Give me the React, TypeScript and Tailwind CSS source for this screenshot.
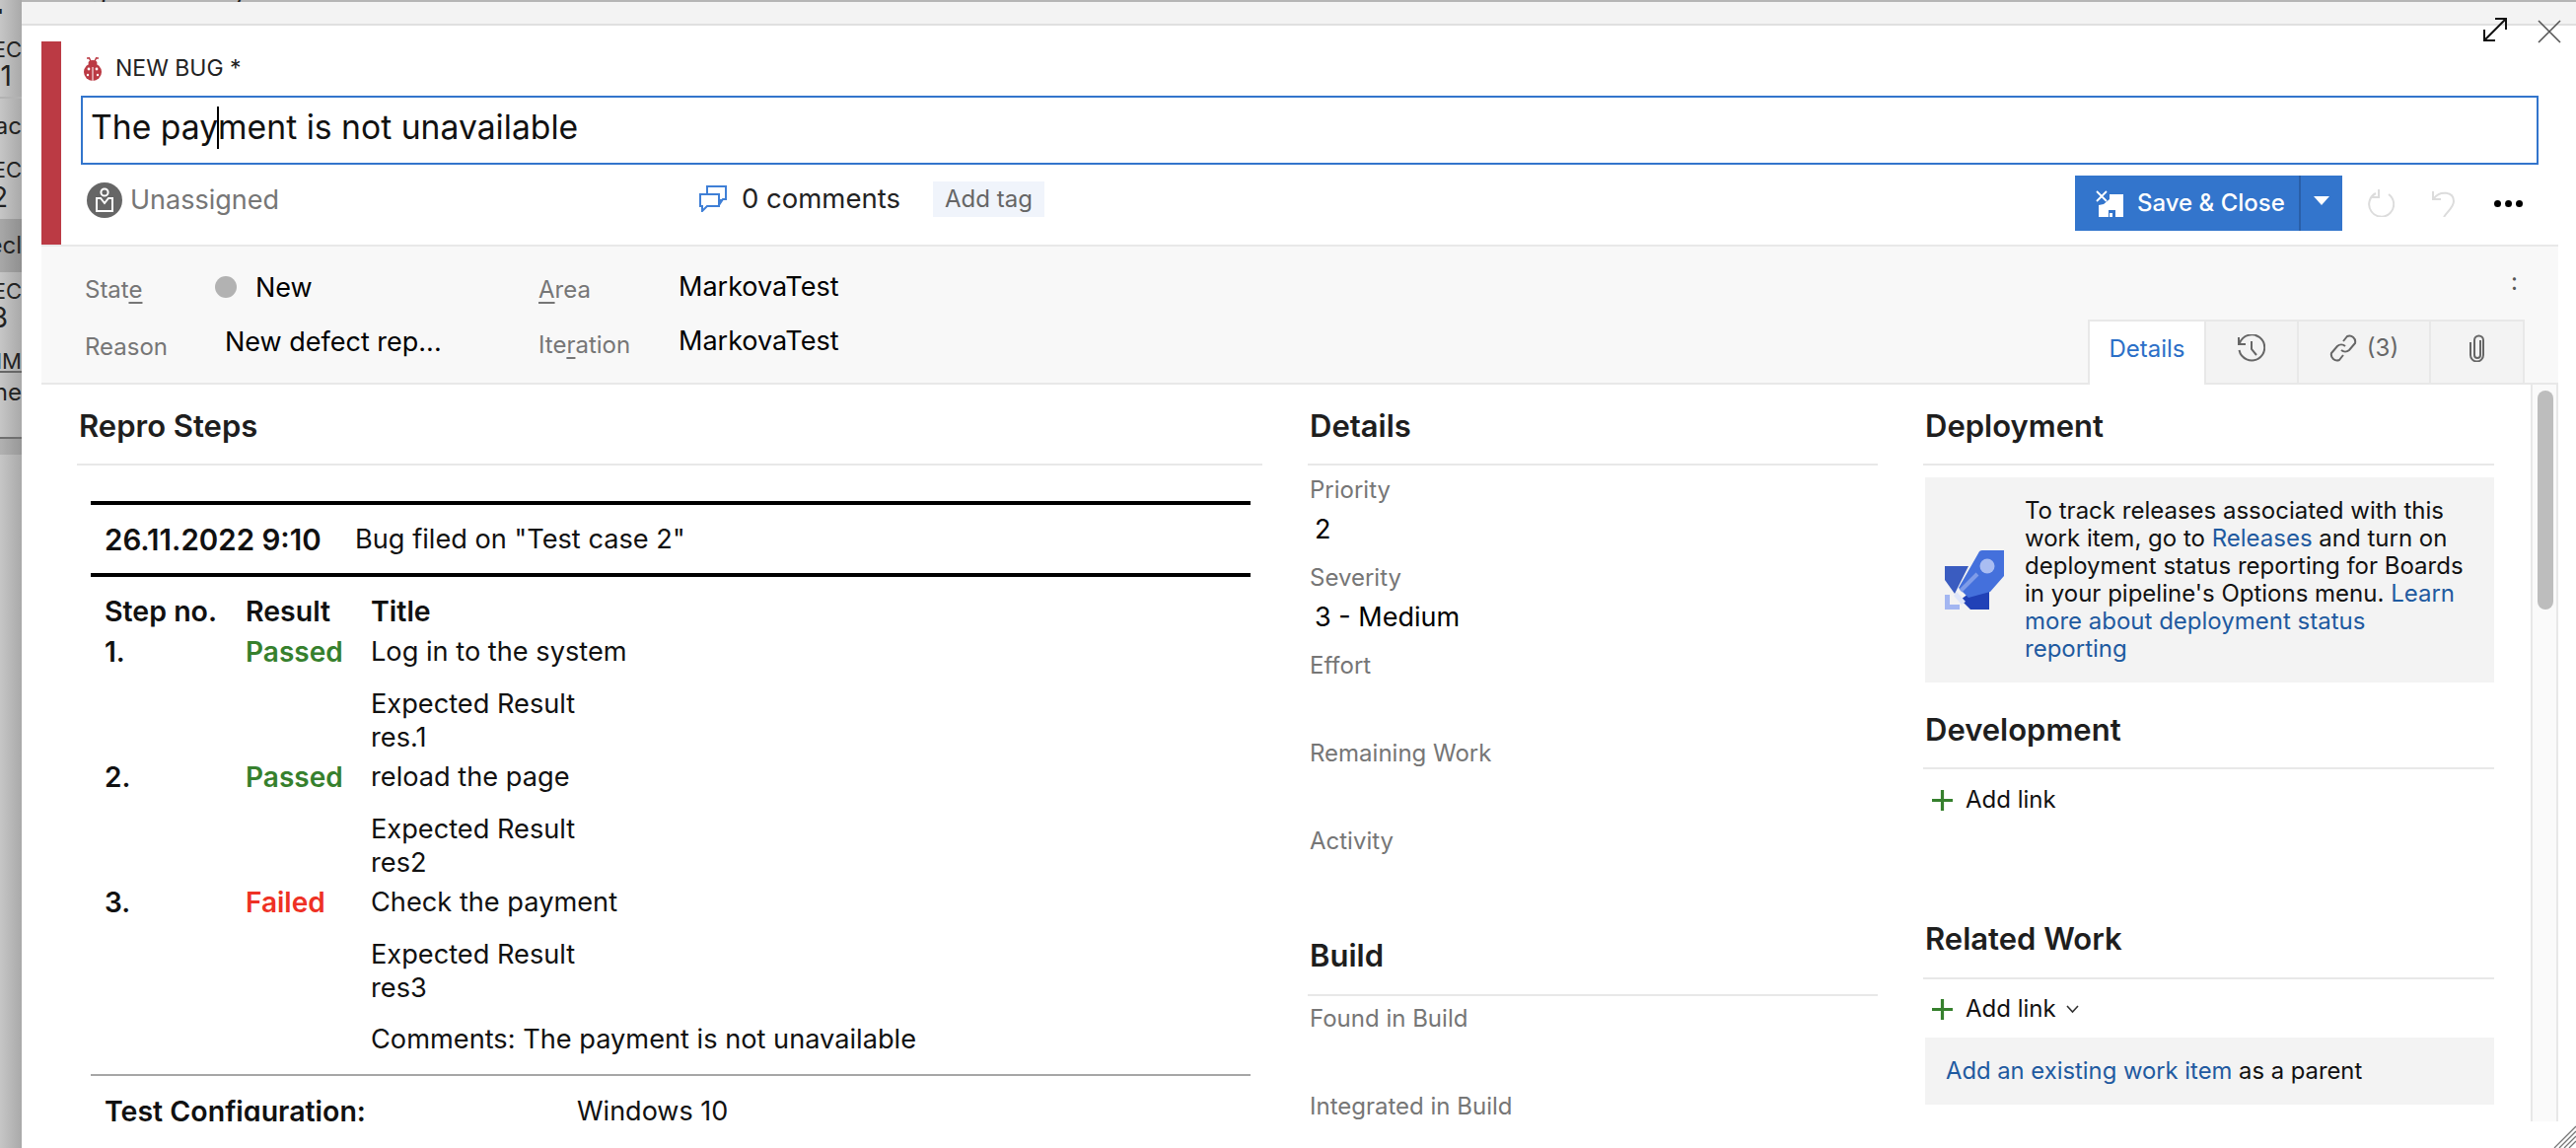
import React from "react";

const font = { fontFamily: "Inter, 'Liberation Sans', sans-serif" };

function Bug() {
  return (
    <svg width="18" height="24" viewBox="0 0 18 24" className="shrink-0">
      <path d="M5 0 L7 4 M13 0 L11 4 M3 1 L5 1 M13 1 L15 1" stroke="#bb3a44" strokeWidth="1.5" fill="none" />
      <ellipse cx="9" cy="6" rx="4.5" ry="3" fill="#bb3a44" />
      <ellipse cx="9" cy="15" rx="9" ry="9" fill="#bb3a44" />
      <circle cx="5" cy="12" r="1.4" fill="#fff" />
      <circle cx="13" cy="12" r="1.4" fill="#fff" />
      <circle cx="4" cy="18" r="1.2" fill="#fff" />
      <circle cx="14" cy="18" r="1.2" fill="#fff" />
      <path d="M9 10 V24" stroke="#fff" strokeWidth="1" />
    </svg>
  );
}

function Avatar() {
  return (
    <svg width="36" height="36" viewBox="0 0 36 36" className="shrink-0">
      <circle cx="18" cy="18" r="18" fill="#666" />
      <circle cx="18" cy="10" r="3.6" fill="none" stroke="#fff" strokeWidth="2" />
      <path d="M10 16 H14 L18 21 L22 16 H26 V29 H10 Z" fill="none" stroke="#fff" strokeWidth="2" />
    </svg>
  );
}

function Comments() {
  return (
    <svg width="28" height="27" viewBox="0 0 28 27" fill="none" stroke="#3f7fd6" strokeWidth="2" className="shrink-0">
      <path d="M8 8 V1 H27 V14 H24 L22 17 V14" />
      <path d="M1 9 H20 V21 H8 L3 26 V21 H1 Z" />
    </svg>
  );
}

function SaveIcon() {
  return (
    <svg width="28" height="27" viewBox="0 0 28 27" className="shrink-0">
      <path d="M1 1 L11 11 M11 1 L1 11" stroke="#fff" strokeWidth="1.8" />
      <path d="M14 4 H28 V27 H20 V20 H13 V27 H3 V15 L8 14 L14 9 Z" fill="#fff" />
      <rect x="14" y="23" width="3" height="4" fill="#fff" />
    </svg>
  );
}

function Rocket() {
  return (
    <svg width="60" height="60" viewBox="0 0 60 60" className="shrink-0">
      <path d="M0 16 L24 16 L10 44 L0 30 Z" fill="#3a5cc0" />
      <path d="M45 28 V60 H26 L16 50 Z" fill="#2141b7" />
      <path d="M34 3 Q35 0 38 0 H60 V26 L46 42 L24 48 L14 38 Z" fill="#4470dc" />
      <circle cx="43" cy="16" r="7.5" fill="#a9bdf2" />
      <path d="M16 41 L33 24" stroke="#7f9ce8" strokeWidth="4" />
      <path d="M12 42 L21 52 L17 55 L9 46 Z" fill="#dfe6fa" />
      <path d="M0 45 H5 V55 H15 V60 H0 Z" fill="#a3b6f1" />
    </svg>
  );
}

function Plus() {
  return (
    <svg width="21" height="21" viewBox="0 0 21 21" className="shrink-0">
      <path d="M10.5 0 V21 M0 10.5 H21" stroke="#36802d" strokeWidth="3.2" />
    </svg>
  );
}

function Left() {
  const rows: [string, string][] = [
    ["h-[14px] leading-[40px] text-[30px] mb-[22px]", "In"],
    ["h-[28px] leading-[28px] text-[22px]", "EC"],
    ["h-[26px] leading-[26px] text-[28px] pr-[10px]", "1"],
    ["h-[10px] mb-[14px] border-b-2 border-[#b3b3b3]", ""],
    ["h-[28px] leading-[28px] text-[24px] mb-[16px]", "oac"],
    ["h-[28px] leading-[28px] text-[22px]", "EC"],
    ["h-[28px] leading-[28px] text-[28px] pr-[14px] mb-[8px]", "2"],
    ["h-[54px] leading-[54px] text-[24px] mb-[5px] bg-black/15", "ecl"],
    ["h-[28px] leading-[28px] text-[22px]", "EC"],
    ["h-[26px] leading-[26px] text-[28px] pr-[14px] mb-[20px]", "3"],
    ["h-[23px] leading-[22px] text-[22px] border-b-2 border-[#666] mb-[2px]", "MM"],
    ["h-[36px] leading-[36px] text-[24px]", "he"],
    ["h-[29px] border-b-2 border-[#6f6f6f]", ""],
    ["h-[16px] bg-black/10", ""],
  ];
  return (
    <div className="w-[22px] h-full shrink-0 overflow-hidden bg-gradient-to-r from-[#c6c6c6] to-[#a9a9a9] text-[#222]">
      {rows.map((r, i) => (
        <div key={i} className={`flex justify-end whitespace-nowrap overflow-hidden ${r[0]}`}>
          {r[1]}
        </div>
      ))}
    </div>
  );
}

function Label({ children, className = "" }: { children: React.ReactNode; className?: string }) {
  return <div className={`text-[24px] leading-[32px] text-[#767676] ${className}`}>{children}</div>;
}

function Head({ children, className }: { children: React.ReactNode; className: string }) {
  return (
    <div className={`border-b-2 border-[#e8e8e8] ${className}`}>
      <div className="text-[31px] leading-[36px] font-semibold text-[#1e1e1e] pl-[2px]">{children}</div>
    </div>
  );
}

function Step({ n, result, color, title, res }: { n: string; result: string; color: string; title: string; res: string }) {
  return (
    <div className="grid grid-cols-[143px_127px_1fr] text-[27.2px] leading-[34px] text-[#111]">
      <div className="font-semibold text-[28px]">{n}</div>
      <div className={`font-semibold text-[28px] ${color}`}>{result}</div>
      <div>{title}</div>
      <div className="col-start-3 mt-[19px]">Expected Result</div>
      <div className="col-start-3">{res}</div>
    </div>
  );
}

function Tab({ children, className }: { children: React.ReactNode; className: string }) {
  return <div className={`flex items-center justify-center gap-[10px] h-[66px] pb-[8px] border-t-2 border-r-2 border-[#e8e8e8] ${className}`}>{children}</div>;
}

function Field({ label, value }: { label: React.ReactNode; value: string }) {
  return (
    <div>
      <Label>{label}</Label>
      <div className="h-[57px] leading-[48px] text-[27px] text-black pl-[5px]">{value}</div>
    </div>
  );
}

export default function App() {
  return (
    <div style={font} className="w-[2612px] h-[1164px] flex overflow-hidden bg-white">
      <Left />
      <div className="flex-1 flex flex-col min-w-0 relative">
        <div className="h-[2px] bg-[#b5b5b5] shrink-0 overflow-hidden">
          <div className="-mt-[26px] pl-[40px] text-[26px] leading-[34px] text-[#222] whitespace-nowrap">Log in to the system</div>
        </div>
        <div className="h-[24px] bg-[#f3f3f3] border-b-2 border-[#e0e0e0] shrink-0" />

        <svg width="26" height="26" viewBox="0 0 26 26" className="absolute left-[2495px] top-[17px]" fill="none" stroke="#111" strokeWidth="2">
          <path d="M2 24 L24 2 M13 2 H24 V13 M2 13 V24 H13" />
        </svg>
        <svg width="24" height="24" viewBox="0 0 24 24" className="absolute left-[2551px] top-[20px]" fill="none" stroke="#555" strokeWidth="1.6">
          <path d="M1 1 L23 23 M23 1 L1 23" />
        </svg>

        <div className="ml-[20px] mr-[18px] mt-[16px] flex-1 flex flex-col min-h-0">
          <div className="h-[206px] border-l-[20px] border-[#bb3a44] pl-[20px] pr-[20px] flex flex-col shrink-0">
            <div className="h-[55px] flex items-center gap-[14px] pl-[3px] text-[23px] text-[#222]">
              <Bug />
              <span>NEW BUG *</span>
            </div>
            <div className="h-[70px] border-2 border-[#3375cc] flex items-center pl-[8px] pb-[6px] text-[33.7px] text-[#111] whitespace-nowrap">
              <span>The pay</span>
              <span className="w-[2px] h-[43px] bg-black -mx-[1px]" />
              <span>ment is not unavailable</span>
            </div>
            <div className="flex-1 flex pt-[11px] items-start">
              <div className="w-[627px] flex items-center gap-[8px] pl-[6px] pt-[5px]">
                <Avatar />
                <span className="text-[27px] text-[#767676]">Unassigned</span>
              </div>
              <div className="flex items-center gap-[15px] pt-[3px] text-[27.5px] text-[#222]">
                <Comments />
                <span className="w-[194px]">0 comments</span>
              </div>
              <div className="mt-[6px] w-[113px] h-[36px] bg-[#f0f4fb] text-[24px] leading-[36px] text-center text-[#666]">Add tag</div>
              <div className="flex-1" />
              <div className="h-[56px] w-[271px] bg-[#3375cc] flex text-white text-[24px] font-medium">
                <div className="flex-1 flex items-center gap-[14px] pl-[21px] border-r-2 border-[#2a5fa8]">
                  <SaveIcon />
                  <span className="whitespace-nowrap">Save &amp; Close</span>
                </div>
                <div className="w-[42px] flex justify-center pt-[21px]">
                  <div className="w-0 h-0 border-x-[8px] border-x-transparent border-t-[9px] border-t-white" />
                </div>
              </div>
              <svg width="28" height="28" viewBox="0 0 28 28" className="ml-[25px] mt-[14px]" fill="none" stroke="#dcdcdc" strokeWidth="2">
                <path d="M9 4 A12.5 12.5 0 1 0 22 5 M12 0 V8 H4" />
              </svg>
              <svg width="24" height="28" viewBox="0 0 24 28" className="ml-[38px] mt-[14px]" fill="none" stroke="#dcdcdc" strokeWidth="2">
                <path d="M1 2 V10 H9 M2 9 C8 1 22 2 22 12 C22 18 16 22 12 28" />
              </svg>
              <div className="ml-[39px] mr-[16px] mt-[25px] flex gap-[4px]">
                <div className="w-[7px] h-[7px] rounded-full bg-black" />
                <div className="w-[7px] h-[7px] rounded-full bg-black" />
                <div className="w-[7px] h-[7px] rounded-full bg-black" />
              </div>
            </div>
          </div>

          <div className="h-[142px] shrink-0 bg-[#f8f8f8] border-y-2 border-[#e8e8e8] flex justify-between">
            <div className="pl-[44px] pt-[21px] text-[27px] text-black">
              <div className="h-[42px] flex items-center">
                <Label className="w-[142px] pt-[4px]">Stat<u className="underline-offset-4">e</u></Label>
                <div className="w-[318px] flex items-center gap-[19px] -ml-[10px]">
                  <div className="w-[22px] h-[22px] rounded-full bg-[#b2b2b2] -mt-[2px]" />
                  <span>New</span>
                </div>
                <Label className="w-[142px] pt-[4px] ml-[10px]"><u className="underline-offset-4">A</u>rea</Label>
                <span className="pb-[2px]">MarkovaTest</span>
              </div>
              <div className="h-[42px] mt-[14px] flex items-center">
                <Label className="w-[142px] pt-[8px]">Reason</Label>
                <div className="w-[318px] whitespace-nowrap pb-[2px]">New defect rep...</div>
                <Label className="w-[142px] pt-[4px]">Ite<u className="underline-offset-4">r</u>ation</Label>
                <span className="pb-[4px]">MarkovaTest</span>
              </div>
            </div>
            <div className="flex flex-col items-end pr-[34px] -mb-[2px]">
              <div className="h-[74px] pr-[7px] pt-[20px] text-[24px] leading-[32px] text-[#555]">:</div>
              <div className="flex text-[24px]">
                <Tab className="w-[120px] bg-white border-l-2 text-[#2b6fc7]">Details</Tab>
                <Tab className="w-[94px] bg-[#f3f3f3] border-b-2">
                  <svg width="28" height="28" viewBox="0 0 28 28" fill="none" stroke="#666" strokeWidth="2">
                    <path d="M1 3 V10 H8 M2 9 A13 13 0 1 1 1.5 16 M14 7 V15 L19 21" />
                  </svg>
                </Tab>
                <Tab className="w-[134px] bg-[#f3f3f3] border-b-2 text-[#666]">
                  <svg width="28" height="28" viewBox="0 0 28 28" fill="none" stroke="#666" strokeWidth="2">
                    <path d="M12 16 A6 6 0 0 0 20 16 L26 9 A6 6 0 0 0 18 2 L14 7" />
                    <path d="M16 12 A6 6 0 0 0 8 12 L2 19 A6 6 0 0 0 10 26 L14 21" />
                  </svg>
                  <span>(3)</span>
                </Tab>
                <Tab className="w-[95px] bg-[#f3f3f3] border-b-2">
                  <svg width="16" height="28" viewBox="0 0 16 28" fill="none" stroke="#666" strokeWidth="2">
                    <path d="M11 6 V21 A3 3 0 0 1 5 21 V6 A4.5 4.5 0 0 1 14 6 V21 A6.5 6.5 0 0 1 1 21 V8" />
                  </svg>
                </Tab>
              </div>
            </div>
          </div>

          <div className="h-[747px] flex overflow-hidden">
            <div className="ml-[36px] w-[1202px] shrink-0">
              <Head className="h-[82px] pt-[24px]">Repro Steps</Head>
              <div className="ml-[14px] w-[1176px] mt-[36px]">
                <div className="h-[77px] border-y-4 border-black flex items-center pl-[14px] pt-[2px] text-[27.2px] text-[#111]">
                  <span className="w-[254px] font-semibold text-[29.5px]">26.11.2022 9:10</span>
                  <span>Bug filed on "Test case 2"</span>
                </div>
                <div className="pl-[14px]">
                  <div className="grid grid-cols-[143px_127px_1fr] text-[28.5px] leading-[34px] font-semibold text-[#111] mt-[18px] mb-[7px]">
                    <div>Step no.</div>
                    <div>Result</div>
                    <div>Title</div>
                  </div>
                  <div className="flex flex-col gap-[6px]">
                    <Step n="1." result="Passed" color="text-[#36802d]" title="Log in to the system" res="res.1" />
                    <Step n="2." result="Passed" color="text-[#36802d]" title="reload the page" res="res2" />
                    <Step n="3." result="Failed" color="text-[#ee3124]" title="Check the payment" res="res3" />
                  </div>
                  <div className="pl-[270px] mt-[18px] text-[27.2px] leading-[34px] text-[#111]">Comments: The payment is not unavailable</div>
                </div>
                <div className="h-[2px] bg-[#a6a6a6] mt-[18px]" />
                <div className="flex pl-[14px] mt-[19px] text-[27px] leading-[34px] text-[#111]">
                  <span className="w-[479px] font-semibold text-[28.5px]">Test Configuration:</span>
                  <span>Windows 10</span>
                </div>
              </div>
            </div>

            <div className="ml-[46px] w-[578px] shrink-0">
              <Head className="h-[82px] pt-[24px]">Details</Head>
              <div className="pl-[2px] pt-[9px]">
                <Field label="Priority" value="2" />
                <Field label="Severity" value="3 - Medium" />
                <Field label="Effort" value="" />
                <Field label="Remaining Work" value="" />
                <Field label="Activity" value="" />
              </div>
              <Head className="h-[84px] pt-[25px]">Build</Head>
              <div className="pl-[2px] pt-[7px]">
                <Field label="Found in Build" value="" />
                <Field label="Integrated in Build" value="" />
              </div>
            </div>

            <div className="ml-[46px] w-[579px] shrink-0">
              <Head className="h-[82px] pt-[24px]">Deployment</Head>
              <div className="ml-[2px] mt-[12px] h-[208px] bg-[#f3f3f3] flex items-center pl-[20px] gap-[21px]">
                <Rocket />
                <div className="text-[24px] leading-[28px] text-[#111] whitespace-nowrap">
                  To track releases associated with this<br />
                  work item, go to <span className="text-[#1f5aa0]">Releases</span> and turn on<br />
                  deployment status reporting for Boards<br />
                  in your pipeline's Options menu. <span className="text-[#1f5aa0]">Learn</span><br />
                  <span className="text-[#1f5aa0]">more about deployment status</span><br />
                  <span className="text-[#1f5aa0]">reporting</span>
                </div>
              </div>
              <Head className="h-[88px] pt-[30px]">Development</Head>
              <div className="mt-[15px] h-[32px] pl-[9px] flex items-center gap-[13px] text-[24px] text-[#111]">
                <Plus />
                <span>Add link</span>
              </div>
              <Head className="h-[166px] pt-[107px]">Related Work</Head>
              <div className="mt-[14px] h-[32px] pl-[9px] flex items-center gap-[13px] text-[24px] text-[#111]">
                <Plus />
                <span>Add link</span>
                <svg width="13" height="9" viewBox="0 0 13 9" fill="none" stroke="#333" strokeWidth="1.6" className="-ml-[3px]">
                  <path d="M1 1 L6.5 7 L12 1" />
                </svg>
              </div>
              <div className="ml-[2px] mt-[13px] h-[68px] bg-[#f3f3f3] flex items-center pl-[21px] text-[23.8px] text-[#111]">
                <span><span className="text-[#1f5aa0]">Add an existing work item</span> as a parent</span>
              </div>
            </div>

            <div className="ml-[37px] w-[28px] shrink-0 bg-[#fafafa] border-x-2 border-[#e8e8e8] pl-[5px] pt-[6px]">
              <div className="w-[16px] h-[222px] rounded-full bg-[#bdbdbd]" />
            </div>
          </div>
        </div>

        <svg width="24" height="24" viewBox="0 0 24 24" className="absolute right-0 bottom-0" fill="none" stroke="#777" strokeWidth="1.3">
          <path d="M2 24 L24 2 M7 24 L24 7 M12 24 L24 12 M17 24 L24 17" />
        </svg>
      </div>
    </div>
  );
}
